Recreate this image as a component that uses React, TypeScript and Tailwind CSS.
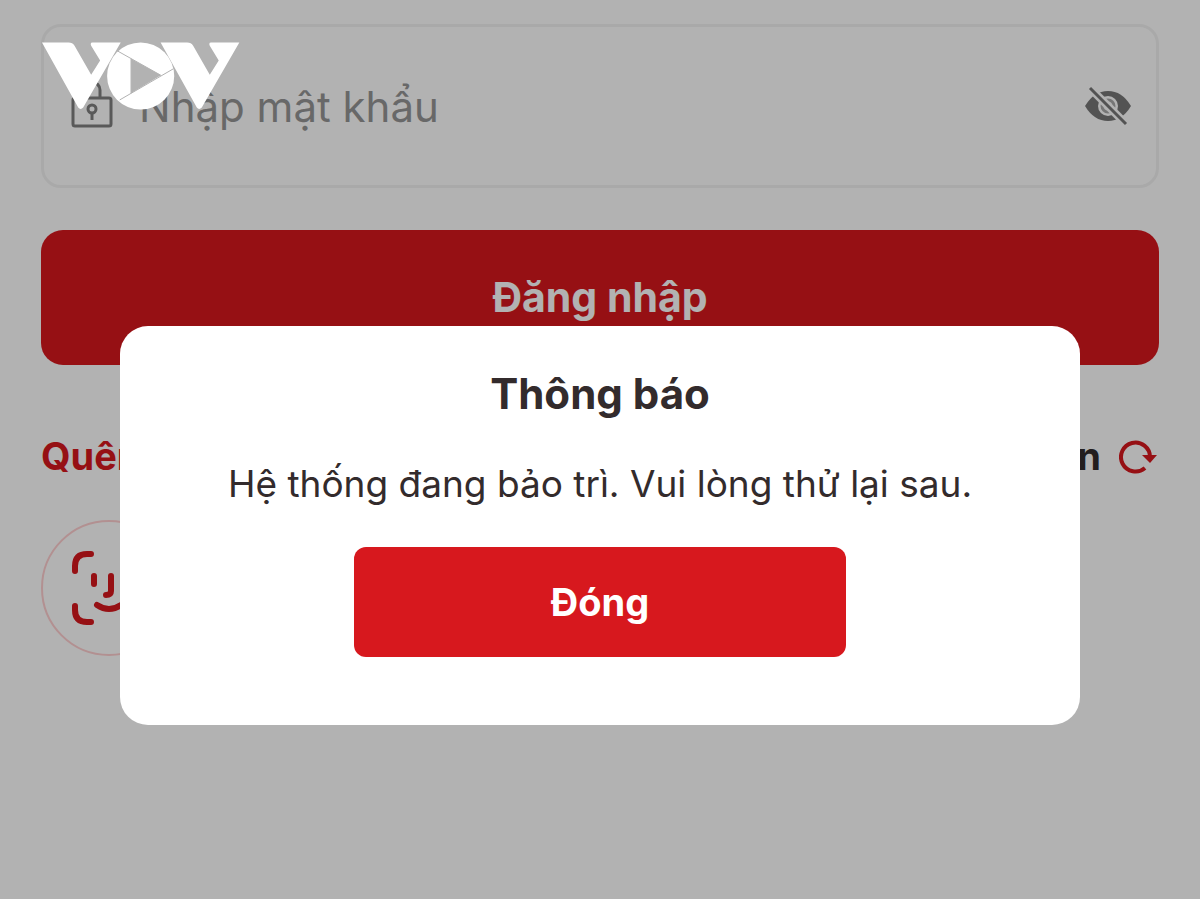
import type { SVGProps } from 'react';

type IconProps = SVGProps<SVGSVGElement>;

function VovLogo(props: IconProps) {
  return (
    <svg viewBox="36 80 596 204" fill="#fff" role="img" aria-label="VOV" {...props}>
      <path d="M36 81H116Q128 81 134 91L184 178L211 135L184 91Q180 81 188 81H273L160 277Q152 286 145 277Z" />
      <path d="M393 81H473Q485 81 491 91L541 178L568 135L541 91Q537 81 545 81H630L517 277Q509 286 502 277Z" />
      <circle cx="333" cy="182" r="101" />
      <path d="M304 130L394 180L304 234Z" fill="#b2b2b2" />
      <path d="M264 107L394 180M432 160L270 254M304 130V234" stroke="#b2b2b2" strokeWidth="3" fill="none" />
    </svg>
  );
}

function LockIcon(props: IconProps) {
  return (
    <svg viewBox="0 0 42 48" fill="none" stroke="#808080" strokeWidth="3" aria-hidden="true" {...props}>
      <rect x="2" y="18" width="38" height="28" rx="2" />
      <path d="M13 18V10a8 8 0 0 1 16 0v8" />
      <circle cx="21" cy="29" r="4" />
      <path d="M21 33v7" />
    </svg>
  );
}

function EyeOffIcon(props: IconProps) {
  return (
    <svg viewBox="0 0 48 40" fill="none" aria-hidden="true" {...props}>
      <path d="M1 20Q10 5 24 5T47 20Q38 35 24 35T1 20Z" fill="#787878" />
      <circle cx="24" cy="20" r="10" fill="#fff" />
      <circle cx="24" cy="20" r="6" stroke="#aaa" strokeWidth="3" />
      <path d="M5 1L43 39" stroke="#fff" strokeWidth="8" />
      <path d="M6 2L42 38" stroke="#787878" strokeWidth="3" />
    </svg>
  );
}

function RefreshIcon(props: IconProps) {
  return (
    <svg viewBox="0 0 40 36" fill="none" aria-hidden="true" {...props}>
      <path d="M26 30A14.5 14.5 0 1 1 31 19" stroke="#d7181e" strokeWidth="4" />
      <path d="M23 17H38L31 25Z" fill="#d7181e" />
    </svg>
  );
}

function FaceIdIcon(props: IconProps) {
  return (
    <svg viewBox="0 0 76 76" fill="none" stroke="#d7181e" strokeWidth="6" strokeLinecap="round" aria-hidden="true" {...props}>
      <path d="M4 21V16Q4 4 16 4H20M56 4H60Q72 4 72 16V21M4 56V60Q4 72 16 72H20M56 72H60Q72 72 72 60V56" />
      <path d="M23 26V34M53 26V34M40 26V41Q40 45 35 45M26 55Q38 63 50 55" />
    </svg>
  );
}

function LoginForm() {
  return (
    <form className="flex flex-col px-[41px] pt-6" onSubmit={e => e.preventDefault()}>
      <div className="flex h-[164px] items-center rounded-[20px] border-3 border-[#f3f3f3] pr-6 pl-[27px]">
        <LockIcon className="mb-1 h-12 w-[42px] shrink-0" />
        <input
          type="password"
          aria-label="Mật khẩu"
          placeholder="Nhập mật khẩu"
          className="ml-[26px] min-w-0 flex-1 bg-transparent text-[42px] outline-none placeholder:text-[#969696]"
        />
        <button type="button" aria-label="Hiện mật khẩu">
          <EyeOffIcon className="h-10 w-12" />
        </button>
      </div>

      <button type="submit" className="mt-[42px] h-[135px] rounded-[22px] bg-[#d7181e] text-[41px] font-bold text-white">
        Đăng nhập
      </button>

      <div className="mt-[63px] flex items-center justify-between text-[38px] font-bold leading-14">
        <a href="#" className="text-[#d7181e]">Quên</a>
        <a href="#" className="flex items-center gap-[18px] text-[#332b2c]">
          Chọn
          <RefreshIcon className="h-9 w-10" />
        </a>
      </div>

      <button
        type="button"
        aria-label="Đăng nhập bằng khuôn mặt"
        className="mt-9 flex size-[136px] items-center justify-center rounded-full border-2 border-[#ffcfd0]"
      >
        <FaceIdIcon className="size-[76px]" />
      </button>
    </form>
  );
}

function NoticeDialog() {
  return (
    <div className="fixed inset-0 flex items-start justify-center bg-black/30 pt-[326px]">
      <div
        role="dialog"
        aria-modal="true"
        aria-labelledby="notice-title"
        className="flex w-4/5 flex-col items-center rounded-[28px] bg-white px-8 pt-10 pb-[68px] text-[#332b2c]"
      >
        <h2 id="notice-title" className="text-[42px] font-bold leading-14">Thông báo</h2>
        <p className="mt-9 text-center text-[37px] leading-13">Hệ thống đang bảo trì. Vui lòng thử lại sau.</p>
        <button type="button" className="mt-[37px] h-[110px] w-[492px] rounded-xl bg-[#d7181e] text-[38px] font-bold text-white">
          Đóng
        </button>
      </div>
    </div>
  );
}

export default function App() {
  return (
    <main className="min-h-screen bg-white font-['Inter','Noto_Sans',sans-serif]">
      <LoginForm />
      <NoticeDialog />
      <VovLogo className="absolute top-[42px] left-[42px] h-[68px] w-[198px]" />
    </main>
  );
}
